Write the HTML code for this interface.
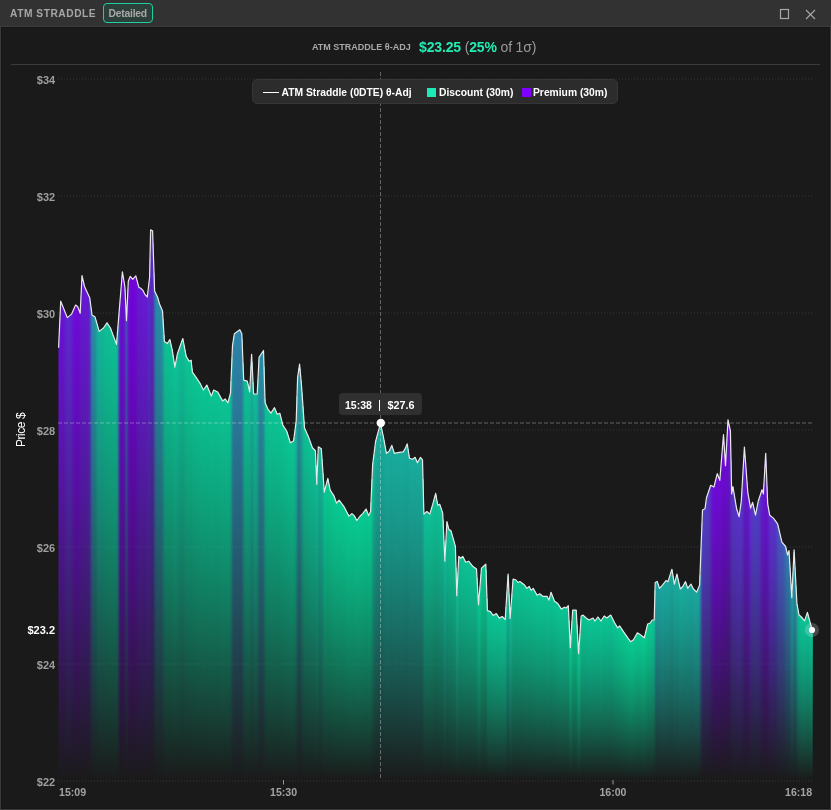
<!DOCTYPE html>
<html><head><meta charset="utf-8"><style>
*{margin:0;padding:0;box-sizing:border-box}
html,body{width:831px;height:810px;overflow:hidden;background:#3c3c3c;font-family:"Liberation Sans",sans-serif}
svg{position:absolute;left:0;top:0}
body{will-change:transform}
</style></head><body>
<div style="position:absolute;left:0;top:0;width:831px;height:26px;background:#323232"></div>
<div style="position:absolute;left:10.00px;top:8.67px;font-size:10.2px;line-height:10.2px;font-weight:bold;color:#a6a6a6;white-space:nowrap;letter-spacing:0.55px">ATM STRADDLE</div>
<div style="position:absolute;left:103px;top:3px;width:50px;height:20px;border:1.5px solid #1fcf9f;border-radius:4px;background:#2d3f3a"></div>
<div style="position:absolute;left:108.50px;top:8.58px;font-size:10.3px;line-height:10.3px;font-weight:bold;color:#a9a9a9;white-space:nowrap;letter-spacing:-0.2px">Detailed</div>
<svg width="831" height="27">
<rect x="780.5" y="9.5" width="8" height="9" fill="none" stroke="#a8a8a8" stroke-width="1.2"/>
<path d="M806,10 L815,19 M815,10 L806,19" stroke="#a8a8a8" stroke-width="1.1"/>
</svg>
<div style="position:absolute;left:1px;top:27px;width:829px;height:781.5px;background:#1a1a1a;box-shadow:inset 1px 1px 0 #151515, inset -1px -1px 0 #161616"></div>
<div style="position:absolute;left:11px;top:64px;width:809px;height:1px;background:#3b3b3b"></div>
<div style="position:absolute;left:312.00px;top:43.48px;font-size:9px;line-height:9px;font-weight:bold;color:#a8a8a8;white-space:nowrap;">ATM STRADDLE &#952;-ADJ</div>
<div style="position:absolute;left:419.00px;top:39.55px;font-size:14px;line-height:14px;color:#22ebb4;white-space:nowrap;letter-spacing:-0.15px"><b>$23.25</b> <span style="color:#9a9a9a">(</span><b>25%</b><span style="color:#9a9a9a"> of 1&#963;)</span></div>
<svg width="831" height="810">
<line x1="58" y1="79.0" x2="812" y2="79.0" stroke="#363636" stroke-width="1" stroke-dasharray="1,2"/><line x1="58" y1="196.0" x2="812" y2="196.0" stroke="#363636" stroke-width="1" stroke-dasharray="1,2"/><line x1="58" y1="313.0" x2="812" y2="313.0" stroke="#363636" stroke-width="1" stroke-dasharray="1,2"/><line x1="58" y1="430.0" x2="812" y2="430.0" stroke="#363636" stroke-width="1" stroke-dasharray="1,2"/><line x1="58" y1="547.0" x2="812" y2="547.0" stroke="#363636" stroke-width="1" stroke-dasharray="1,2"/><line x1="58" y1="664.0" x2="812" y2="664.0" stroke="#363636" stroke-width="1" stroke-dasharray="1,2"/><line x1="58" y1="781.0" x2="812" y2="781.0" stroke="#363636" stroke-width="1" stroke-dasharray="1,2"/>
<defs><linearGradient id="g0" x1="0" y1="0" x2="0" y2="1"><stop offset="0.00" stop-color="#06dc9e" stop-opacity="1.000"/><stop offset="1.00" stop-color="#06dc9e" stop-opacity="0.000"/></linearGradient><linearGradient id="g1" x1="0" y1="0" x2="0" y2="1"><stop offset="0.00" stop-color="#07d99f" stop-opacity="1.000"/><stop offset="1.00" stop-color="#07d99f" stop-opacity="0.000"/></linearGradient><linearGradient id="g2" x1="0" y1="0" x2="0" y2="1"><stop offset="0.00" stop-color="#09d6a0" stop-opacity="1.000"/><stop offset="1.00" stop-color="#09d6a0" stop-opacity="0.000"/></linearGradient><linearGradient id="g3" x1="0" y1="0" x2="0" y2="1"><stop offset="0.00" stop-color="#0ad4a1" stop-opacity="1.000"/><stop offset="1.00" stop-color="#0ad4a1" stop-opacity="0.000"/></linearGradient><linearGradient id="g4" x1="0" y1="0" x2="0" y2="1"><stop offset="0.00" stop-color="#0cd1a2" stop-opacity="1.000"/><stop offset="1.00" stop-color="#0cd1a2" stop-opacity="0.000"/></linearGradient><linearGradient id="g5" x1="0" y1="0" x2="0" y2="1"><stop offset="0.00" stop-color="#0dcea3" stop-opacity="1.000"/><stop offset="1.00" stop-color="#0dcea3" stop-opacity="0.000"/></linearGradient><linearGradient id="g6" x1="0" y1="0" x2="0" y2="1"><stop offset="0.00" stop-color="#0ecba4" stop-opacity="1.000"/><stop offset="1.00" stop-color="#0ecba4" stop-opacity="0.000"/></linearGradient><linearGradient id="g7" x1="0" y1="0" x2="0" y2="1"><stop offset="0.00" stop-color="#10c8a5" stop-opacity="1.000"/><stop offset="1.00" stop-color="#10c8a5" stop-opacity="0.000"/></linearGradient><linearGradient id="g8" x1="0" y1="0" x2="0" y2="1"><stop offset="0.00" stop-color="#11c6a6" stop-opacity="1.000"/><stop offset="1.00" stop-color="#11c6a6" stop-opacity="0.000"/></linearGradient><linearGradient id="g9" x1="0" y1="0" x2="0" y2="1"><stop offset="0.00" stop-color="#13c3a7" stop-opacity="1.000"/><stop offset="1.00" stop-color="#13c3a7" stop-opacity="0.000"/></linearGradient><linearGradient id="g10" x1="0" y1="0" x2="0" y2="1"><stop offset="0.00" stop-color="#14c0a8" stop-opacity="1.000"/><stop offset="1.00" stop-color="#14c0a8" stop-opacity="0.000"/></linearGradient><linearGradient id="g11" x1="0" y1="0" x2="0" y2="1"><stop offset="0.00" stop-color="#17bbaa" stop-opacity="1.000"/><stop offset="1.00" stop-color="#17bbaa" stop-opacity="0.000"/></linearGradient><linearGradient id="g12" x1="0" y1="0" x2="0" y2="1"><stop offset="0.00" stop-color="#19b6ab" stop-opacity="1.000"/><stop offset="1.00" stop-color="#19b6ab" stop-opacity="0.000"/></linearGradient><linearGradient id="g13" x1="0" y1="0" x2="0" y2="1"><stop offset="0.00" stop-color="#1cb1ad" stop-opacity="1.000"/><stop offset="1.00" stop-color="#1cb1ad" stop-opacity="0.000"/></linearGradient><linearGradient id="g14" x1="0" y1="0" x2="0" y2="1"><stop offset="0.00" stop-color="#1eacae" stop-opacity="1.000"/><stop offset="1.00" stop-color="#1eacae" stop-opacity="0.000"/></linearGradient><linearGradient id="g15" x1="0" y1="0" x2="0" y2="1"><stop offset="0.00" stop-color="#21a7b0" stop-opacity="1.000"/><stop offset="1.00" stop-color="#21a7b0" stop-opacity="0.000"/></linearGradient><linearGradient id="g16" x1="0" y1="0" x2="0" y2="1"><stop offset="0.00" stop-color="#24a2b2" stop-opacity="1.000"/><stop offset="1.00" stop-color="#24a2b2" stop-opacity="0.000"/></linearGradient><linearGradient id="g17" x1="0" y1="0" x2="0" y2="1"><stop offset="0.00" stop-color="#269db3" stop-opacity="1.000"/><stop offset="1.00" stop-color="#269db3" stop-opacity="0.000"/></linearGradient><linearGradient id="g18" x1="0" y1="0" x2="0" y2="1"><stop offset="0.00" stop-color="#2998b5" stop-opacity="1.000"/><stop offset="1.00" stop-color="#2998b5" stop-opacity="0.000"/></linearGradient><linearGradient id="g19" x1="0" y1="0" x2="0" y2="1"><stop offset="0.00" stop-color="#2b93b6" stop-opacity="1.000"/><stop offset="1.00" stop-color="#2b93b6" stop-opacity="0.000"/></linearGradient><linearGradient id="g20" x1="0" y1="0" x2="0" y2="1"><stop offset="0.00" stop-color="#2e8eb8" stop-opacity="1.000"/><stop offset="1.00" stop-color="#2e8eb8" stop-opacity="0.000"/></linearGradient><linearGradient id="g21" x1="0" y1="0" x2="0" y2="1"><stop offset="0.00" stop-color="#3384bc" stop-opacity="1.000"/><stop offset="1.00" stop-color="#3384bc" stop-opacity="0.000"/></linearGradient><linearGradient id="g22" x1="0" y1="0" x2="0" y2="1"><stop offset="0.00" stop-color="#397ac0" stop-opacity="1.000"/><stop offset="1.00" stop-color="#397ac0" stop-opacity="0.000"/></linearGradient><linearGradient id="g23" x1="0" y1="0" x2="0" y2="1"><stop offset="0.00" stop-color="#3e70c4" stop-opacity="1.000"/><stop offset="1.00" stop-color="#3e70c4" stop-opacity="0.000"/></linearGradient><linearGradient id="g24" x1="0" y1="0" x2="0" y2="1"><stop offset="0.00" stop-color="#4466c8" stop-opacity="1.000"/><stop offset="1.00" stop-color="#4466c8" stop-opacity="0.000"/></linearGradient><linearGradient id="g25" x1="0" y1="0" x2="0" y2="1"><stop offset="0.00" stop-color="#495ccc" stop-opacity="1.000"/><stop offset="1.00" stop-color="#495ccc" stop-opacity="0.000"/></linearGradient><linearGradient id="g26" x1="0" y1="0" x2="0" y2="1"><stop offset="0.00" stop-color="#4e52d0" stop-opacity="1.000"/><stop offset="1.00" stop-color="#4e52d0" stop-opacity="0.000"/></linearGradient><linearGradient id="g27" x1="0" y1="0" x2="0" y2="1"><stop offset="0.00" stop-color="#5448d4" stop-opacity="1.000"/><stop offset="1.00" stop-color="#5448d4" stop-opacity="0.000"/></linearGradient><linearGradient id="g28" x1="0" y1="0" x2="0" y2="1"><stop offset="0.00" stop-color="#593ed8" stop-opacity="1.000"/><stop offset="1.00" stop-color="#593ed8" stop-opacity="0.000"/></linearGradient><linearGradient id="g29" x1="0" y1="0" x2="0" y2="1"><stop offset="0.00" stop-color="#5f34dc" stop-opacity="1.000"/><stop offset="1.00" stop-color="#5f34dc" stop-opacity="0.000"/></linearGradient><linearGradient id="g30" x1="0" y1="0" x2="0" y2="1"><stop offset="0.00" stop-color="#642ae0" stop-opacity="1.000"/><stop offset="1.00" stop-color="#642ae0" stop-opacity="0.000"/></linearGradient><linearGradient id="g31" x1="0" y1="0" x2="0" y2="1"><stop offset="0.00" stop-color="#6626e1" stop-opacity="1.000"/><stop offset="1.00" stop-color="#6626e1" stop-opacity="0.000"/></linearGradient><linearGradient id="g32" x1="0" y1="0" x2="0" y2="1"><stop offset="0.00" stop-color="#6922e3" stop-opacity="1.000"/><stop offset="1.00" stop-color="#6922e3" stop-opacity="0.000"/></linearGradient><linearGradient id="g33" x1="0" y1="0" x2="0" y2="1"><stop offset="0.00" stop-color="#6b1de4" stop-opacity="1.000"/><stop offset="1.00" stop-color="#6b1de4" stop-opacity="0.000"/></linearGradient><linearGradient id="g34" x1="0" y1="0" x2="0" y2="1"><stop offset="0.00" stop-color="#6e19e6" stop-opacity="1.000"/><stop offset="1.00" stop-color="#6e19e6" stop-opacity="0.000"/></linearGradient><linearGradient id="g35" x1="0" y1="0" x2="0" y2="1"><stop offset="0.00" stop-color="#7015e7" stop-opacity="1.000"/><stop offset="1.00" stop-color="#7015e7" stop-opacity="0.000"/></linearGradient><linearGradient id="g36" x1="0" y1="0" x2="0" y2="1"><stop offset="0.00" stop-color="#7211e8" stop-opacity="1.000"/><stop offset="1.00" stop-color="#7211e8" stop-opacity="0.000"/></linearGradient><linearGradient id="g37" x1="0" y1="0" x2="0" y2="1"><stop offset="0.00" stop-color="#750dea" stop-opacity="1.000"/><stop offset="1.00" stop-color="#750dea" stop-opacity="0.000"/></linearGradient><linearGradient id="g38" x1="0" y1="0" x2="0" y2="1"><stop offset="0.00" stop-color="#7708eb" stop-opacity="1.000"/><stop offset="1.00" stop-color="#7708eb" stop-opacity="0.000"/></linearGradient><linearGradient id="g39" x1="0" y1="0" x2="0" y2="1"><stop offset="0.00" stop-color="#7a04ed" stop-opacity="1.000"/><stop offset="1.00" stop-color="#7a04ed" stop-opacity="0.000"/></linearGradient><linearGradient id="g40" x1="0" y1="0" x2="0" y2="1"><stop offset="0.00" stop-color="#7c00ee" stop-opacity="1.000"/><stop offset="1.00" stop-color="#7c00ee" stop-opacity="0.000"/></linearGradient></defs><rect x="58.5" y="338.9" width="1.3" height="441.1" fill="url(#g36)"/><rect x="59.5" y="316.7" width="1.3" height="463.3" fill="url(#g36)"/><rect x="60.5" y="301.9" width="1.3" height="478.1" fill="url(#g36)"/><rect x="61.5" y="304.4" width="1.3" height="475.6" fill="url(#g36)"/><rect x="62.5" y="306.9" width="1.3" height="473.1" fill="url(#g36)"/><rect x="63.5" y="309.4" width="1.3" height="470.6" fill="url(#g35)"/><rect x="64.5" y="311.9" width="1.3" height="468.1" fill="url(#g34)"/><rect x="65.5" y="314.4" width="1.3" height="465.6" fill="url(#g32)"/><rect x="66.5" y="316.9" width="1.3" height="463.1" fill="url(#g31)"/><rect x="67.5" y="317.0" width="1.3" height="463.0" fill="url(#g30)"/><rect x="68.5" y="316.2" width="1.3" height="463.8" fill="url(#g30)"/><rect x="69.5" y="315.4" width="1.3" height="464.6" fill="url(#g30)"/><rect x="70.5" y="314.6" width="1.3" height="465.4" fill="url(#g31)"/><rect x="71.5" y="313.2" width="1.3" height="466.8" fill="url(#g33)"/><rect x="72.5" y="310.9" width="1.3" height="469.1" fill="url(#g35)"/><rect x="73.5" y="308.7" width="1.3" height="471.3" fill="url(#g37)"/><rect x="74.5" y="306.4" width="1.3" height="473.6" fill="url(#g38)"/><rect x="75.5" y="305.4" width="1.3" height="474.6" fill="url(#g38)"/><rect x="76.5" y="306.0" width="1.3" height="474.0" fill="url(#g38)"/><rect x="77.5" y="307.5" width="1.3" height="472.5" fill="url(#g38)"/><rect x="78.5" y="310.1" width="1.3" height="469.9" fill="url(#g38)"/><rect x="79.5" y="312.8" width="1.3" height="467.2" fill="url(#g37)"/><rect x="80.5" y="296.5" width="1.3" height="483.5" fill="url(#g35)"/><rect x="81.5" y="275.6" width="1.3" height="504.4" fill="url(#g34)"/><rect x="82.5" y="280.0" width="1.3" height="500.0" fill="url(#g34)"/><rect x="83.5" y="284.3" width="1.3" height="495.7" fill="url(#g34)"/><rect x="84.5" y="287.6" width="1.3" height="492.4" fill="url(#g34)"/><rect x="85.5" y="289.7" width="1.3" height="490.3" fill="url(#g34)"/><rect x="86.5" y="291.9" width="1.3" height="488.1" fill="url(#g34)"/><rect x="87.5" y="294.0" width="1.3" height="486.0" fill="url(#g34)"/><rect x="88.5" y="296.2" width="1.3" height="483.8" fill="url(#g32)"/><rect x="89.5" y="300.0" width="1.3" height="480.0" fill="url(#g28)"/><rect x="90.5" y="307.5" width="1.3" height="472.5" fill="url(#g24)"/><rect x="91.5" y="315.0" width="1.3" height="465.0" fill="url(#g20)"/><rect x="92.5" y="315.6" width="1.3" height="464.4" fill="url(#g18)"/><rect x="93.5" y="316.2" width="1.3" height="463.8" fill="url(#g18)"/><rect x="94.5" y="317.0" width="1.3" height="463.0" fill="url(#g17)"/><rect x="95.5" y="320.5" width="1.3" height="459.5" fill="url(#g15)"/><rect x="96.5" y="323.9" width="1.3" height="456.1" fill="url(#g11)"/><rect x="97.5" y="327.3" width="1.3" height="452.7" fill="url(#g9)"/><rect x="98.5" y="330.7" width="1.3" height="449.3" fill="url(#g8)"/><rect x="99.5" y="330.8" width="1.3" height="449.2" fill="url(#g8)"/><rect x="100.5" y="330.0" width="1.3" height="450.0" fill="url(#g8)"/><rect x="101.5" y="329.2" width="1.3" height="450.8" fill="url(#g8)"/><rect x="102.5" y="328.4" width="1.3" height="451.6" fill="url(#g8)"/><rect x="103.5" y="327.3" width="1.3" height="452.7" fill="url(#g7)"/><rect x="104.5" y="325.8" width="1.3" height="454.2" fill="url(#g5)"/><rect x="105.5" y="324.3" width="1.3" height="455.7" fill="url(#g4)"/><rect x="106.5" y="322.8" width="1.3" height="457.2" fill="url(#g4)"/><rect x="107.5" y="324.3" width="1.3" height="455.7" fill="url(#g4)"/><rect x="108.5" y="325.9" width="1.3" height="454.1" fill="url(#g4)"/><rect x="109.5" y="327.4" width="1.3" height="452.6" fill="url(#g4)"/><rect x="110.5" y="329.6" width="1.3" height="450.4" fill="url(#g4)"/><rect x="111.5" y="332.3" width="1.3" height="447.7" fill="url(#g4)"/><rect x="112.5" y="335.0" width="1.3" height="445.0" fill="url(#g4)"/><rect x="113.5" y="337.7" width="1.3" height="442.3" fill="url(#g4)"/><rect x="114.5" y="340.4" width="1.3" height="439.6" fill="url(#g4)"/><rect x="115.5" y="343.1" width="1.3" height="436.9" fill="url(#g5)"/><rect x="116.5" y="338.2" width="1.3" height="441.8" fill="url(#g8)"/><rect x="117.5" y="325.9" width="1.3" height="454.1" fill="url(#g16)"/><rect x="118.5" y="313.6" width="1.3" height="466.4" fill="url(#g26)"/><rect x="119.5" y="301.3" width="1.3" height="478.7" fill="url(#g34)"/><rect x="120.5" y="289.0" width="1.3" height="491.0" fill="url(#g37)"/><rect x="121.5" y="276.7" width="1.3" height="503.3" fill="url(#g38)"/><rect x="122.5" y="275.4" width="1.3" height="504.6" fill="url(#g37)"/><rect x="123.5" y="281.5" width="1.3" height="498.5" fill="url(#g35)"/><rect x="124.5" y="289.1" width="1.3" height="490.9" fill="url(#g31)"/><rect x="125.5" y="310.2" width="1.3" height="469.8" fill="url(#g26)"/><rect x="126.5" y="309.7" width="1.3" height="470.3" fill="url(#g27)"/><rect x="127.5" y="287.8" width="1.3" height="492.2" fill="url(#g32)"/><rect x="128.5" y="279.5" width="1.3" height="500.5" fill="url(#g37)"/><rect x="129.5" y="277.0" width="1.3" height="503.0" fill="url(#g39)"/><rect x="130.5" y="277.1" width="1.3" height="502.9" fill="url(#g40)"/><rect x="131.5" y="278.3" width="1.3" height="501.7" fill="url(#g40)"/><rect x="132.5" y="279.1" width="1.3" height="500.9" fill="url(#g40)"/><rect x="133.5" y="277.9" width="1.3" height="502.1" fill="url(#g40)"/><rect x="134.5" y="276.8" width="1.3" height="503.2" fill="url(#g39)"/><rect x="135.5" y="276.7" width="1.3" height="503.3" fill="url(#g38)"/><rect x="136.5" y="280.4" width="1.3" height="499.6" fill="url(#g36)"/><rect x="137.5" y="284.2" width="1.3" height="495.8" fill="url(#g35)"/><rect x="138.5" y="287.3" width="1.3" height="492.7" fill="url(#g34)"/><rect x="139.5" y="287.8" width="1.3" height="492.2" fill="url(#g34)"/><rect x="140.5" y="288.5" width="1.3" height="491.5" fill="url(#g34)"/><rect x="141.5" y="289.4" width="1.3" height="490.6" fill="url(#g34)"/><rect x="142.5" y="290.7" width="1.3" height="489.3" fill="url(#g34)"/><rect x="143.5" y="292.7" width="1.3" height="487.3" fill="url(#g34)"/><rect x="144.5" y="294.4" width="1.3" height="485.6" fill="url(#g34)"/><rect x="145.5" y="295.6" width="1.3" height="484.4" fill="url(#g34)"/><rect x="146.5" y="296.7" width="1.3" height="483.3" fill="url(#g33)"/><rect x="147.5" y="291.0" width="1.3" height="489.0" fill="url(#g31)"/><rect x="148.5" y="282.4" width="1.3" height="497.6" fill="url(#g30)"/><rect x="149.5" y="258.3" width="1.3" height="521.7" fill="url(#g30)"/><rect x="150.5" y="230.1" width="1.3" height="549.9" fill="url(#g30)"/><rect x="151.5" y="230.6" width="1.3" height="549.4" fill="url(#g30)"/><rect x="152.5" y="242.9" width="1.3" height="537.1" fill="url(#g29)"/><rect x="153.5" y="273.0" width="1.3" height="507.0" fill="url(#g26)"/><rect x="154.5" y="291.9" width="1.3" height="488.1" fill="url(#g22)"/><rect x="155.5" y="293.9" width="1.3" height="486.1" fill="url(#g19)"/><rect x="156.5" y="296.0" width="1.3" height="484.0" fill="url(#g18)"/><rect x="157.5" y="298.8" width="1.3" height="481.2" fill="url(#g18)"/><rect x="158.5" y="302.2" width="1.3" height="477.8" fill="url(#g18)"/><rect x="159.5" y="305.1" width="1.3" height="474.9" fill="url(#g18)"/><rect x="160.5" y="307.4" width="1.3" height="472.6" fill="url(#g18)"/><rect x="161.5" y="309.8" width="1.3" height="470.2" fill="url(#g16)"/><rect x="162.5" y="319.0" width="1.3" height="461.0" fill="url(#g13)"/><rect x="163.5" y="335.1" width="1.3" height="444.9" fill="url(#g8)"/><rect x="164.5" y="341.9" width="1.3" height="438.1" fill="url(#g5)"/><rect x="165.5" y="342.6" width="1.3" height="437.4" fill="url(#g4)"/><rect x="166.5" y="343.2" width="1.3" height="436.8" fill="url(#g3)"/><rect x="167.5" y="342.5" width="1.3" height="437.5" fill="url(#g3)"/><rect x="168.5" y="340.8" width="1.3" height="439.2" fill="url(#g3)"/><rect x="169.5" y="340.4" width="1.3" height="439.6" fill="url(#g3)"/><rect x="170.5" y="344.7" width="1.3" height="435.3" fill="url(#g3)"/><rect x="171.5" y="349.1" width="1.3" height="430.9" fill="url(#g3)"/><rect x="172.5" y="354.9" width="1.3" height="425.1" fill="url(#g3)"/><rect x="173.5" y="361.4" width="1.3" height="418.6" fill="url(#g3)"/><rect x="174.5" y="366.7" width="1.3" height="413.3" fill="url(#g3)"/><rect x="175.5" y="361.3" width="1.3" height="418.7" fill="url(#g3)"/><rect x="176.5" y="355.9" width="1.3" height="424.1" fill="url(#g3)"/><rect x="177.5" y="352.3" width="1.3" height="427.7" fill="url(#g4)"/><rect x="178.5" y="349.4" width="1.3" height="430.6" fill="url(#g4)"/><rect x="179.5" y="346.5" width="1.3" height="433.5" fill="url(#g5)"/><rect x="180.5" y="343.7" width="1.3" height="436.3" fill="url(#g6)"/><rect x="181.5" y="340.8" width="1.3" height="439.2" fill="url(#g6)"/><rect x="182.5" y="339.5" width="1.3" height="440.5" fill="url(#g5)"/><rect x="183.5" y="344.8" width="1.3" height="435.2" fill="url(#g4)"/><rect x="184.5" y="350.0" width="1.3" height="430.0" fill="url(#g3)"/><rect x="185.5" y="355.3" width="1.3" height="424.7" fill="url(#g2)"/><rect x="186.5" y="357.7" width="1.3" height="422.3" fill="url(#g2)"/><rect x="187.5" y="359.3" width="1.3" height="420.7" fill="url(#g2)"/><rect x="188.5" y="361.0" width="1.3" height="419.0" fill="url(#g2)"/><rect x="189.5" y="360.8" width="1.3" height="419.2" fill="url(#g2)"/><rect x="190.5" y="360.2" width="1.3" height="419.8" fill="url(#g2)"/><rect x="191.5" y="368.5" width="1.3" height="411.5" fill="url(#g2)"/><rect x="192.5" y="373.1" width="1.3" height="406.9" fill="url(#g2)"/><rect x="193.5" y="374.5" width="1.3" height="405.5" fill="url(#g2)"/><rect x="194.5" y="375.9" width="1.3" height="404.1" fill="url(#g2)"/><rect x="195.5" y="377.3" width="1.3" height="402.7" fill="url(#g2)"/><rect x="196.5" y="378.8" width="1.3" height="401.2" fill="url(#g2)"/><rect x="197.5" y="380.3" width="1.3" height="399.7" fill="url(#g2)"/><rect x="198.5" y="381.8" width="1.3" height="398.2" fill="url(#g2)"/><rect x="199.5" y="383.3" width="1.3" height="396.7" fill="url(#g2)"/><rect x="200.5" y="385.3" width="1.3" height="394.7" fill="url(#g2)"/><rect x="201.5" y="387.2" width="1.3" height="392.8" fill="url(#g2)"/><rect x="202.5" y="389.2" width="1.3" height="390.8" fill="url(#g2)"/><rect x="203.5" y="389.1" width="1.3" height="390.9" fill="url(#g2)"/><rect x="204.5" y="387.7" width="1.3" height="392.3" fill="url(#g2)"/><rect x="205.5" y="386.3" width="1.3" height="393.7" fill="url(#g2)"/><rect x="206.5" y="385.6" width="1.3" height="394.4" fill="url(#g2)"/><rect x="207.5" y="388.0" width="1.3" height="392.0" fill="url(#g2)"/><rect x="208.5" y="390.4" width="1.3" height="389.6" fill="url(#g2)"/><rect x="209.5" y="392.8" width="1.3" height="387.2" fill="url(#g2)"/><rect x="210.5" y="395.2" width="1.3" height="384.8" fill="url(#g2)"/><rect x="211.5" y="394.2" width="1.3" height="385.8" fill="url(#g2)"/><rect x="212.5" y="391.7" width="1.3" height="388.3" fill="url(#g2)"/><rect x="213.5" y="390.1" width="1.3" height="389.9" fill="url(#g2)"/><rect x="214.5" y="390.6" width="1.3" height="389.4" fill="url(#g2)"/><rect x="215.5" y="391.1" width="1.3" height="388.9" fill="url(#g2)"/><rect x="216.5" y="391.6" width="1.3" height="388.4" fill="url(#g2)"/><rect x="217.5" y="392.5" width="1.3" height="387.5" fill="url(#g2)"/><rect x="218.5" y="394.4" width="1.3" height="385.6" fill="url(#g2)"/><rect x="219.5" y="396.2" width="1.3" height="383.8" fill="url(#g2)"/><rect x="220.5" y="398.0" width="1.3" height="382.0" fill="url(#g2)"/><rect x="221.5" y="399.8" width="1.3" height="380.2" fill="url(#g2)"/><rect x="222.5" y="400.6" width="1.3" height="379.4" fill="url(#g2)"/><rect x="223.5" y="399.8" width="1.3" height="380.2" fill="url(#g2)"/><rect x="224.5" y="399.1" width="1.3" height="380.9" fill="url(#g2)"/><rect x="225.5" y="400.1" width="1.3" height="379.9" fill="url(#g2)"/><rect x="226.5" y="401.5" width="1.3" height="378.5" fill="url(#g2)"/><rect x="227.5" y="402.4" width="1.3" height="377.6" fill="url(#g2)"/><rect x="228.5" y="398.7" width="1.3" height="381.3" fill="url(#g2)"/><rect x="229.5" y="394.9" width="1.3" height="385.1" fill="url(#g4)"/><rect x="230.5" y="381.1" width="1.3" height="398.9" fill="url(#g8)"/><rect x="231.5" y="357.5" width="1.3" height="422.5" fill="url(#g14)"/><rect x="232.5" y="342.5" width="1.3" height="437.5" fill="url(#g18)"/><rect x="233.5" y="336.2" width="1.3" height="443.8" fill="url(#g20)"/><rect x="234.5" y="333.3" width="1.3" height="446.7" fill="url(#g20)"/><rect x="235.5" y="332.5" width="1.3" height="447.5" fill="url(#g20)"/><rect x="236.5" y="331.8" width="1.3" height="448.2" fill="url(#g20)"/><rect x="237.5" y="331.1" width="1.3" height="448.9" fill="url(#g20)"/><rect x="238.5" y="330.4" width="1.3" height="449.6" fill="url(#g20)"/><rect x="239.5" y="330.2" width="1.3" height="449.8" fill="url(#g20)"/><rect x="240.5" y="332.1" width="1.3" height="447.9" fill="url(#g20)"/><rect x="241.5" y="338.6" width="1.3" height="441.4" fill="url(#g18)"/><rect x="242.5" y="363.0" width="1.3" height="417.0" fill="url(#g14)"/><rect x="243.5" y="380.2" width="1.3" height="399.8" fill="url(#g10)"/><rect x="244.5" y="380.5" width="1.3" height="399.5" fill="url(#g6)"/><rect x="245.5" y="380.7" width="1.3" height="399.3" fill="url(#g4)"/><rect x="246.5" y="381.0" width="1.3" height="399.0" fill="url(#g4)"/><rect x="247.5" y="384.3" width="1.3" height="395.7" fill="url(#g4)"/><rect x="248.5" y="388.8" width="1.3" height="391.2" fill="url(#g5)"/><rect x="249.5" y="386.1" width="1.3" height="393.9" fill="url(#g7)"/><rect x="250.5" y="366.3" width="1.3" height="413.7" fill="url(#g9)"/><rect x="251.5" y="362.3" width="1.3" height="417.7" fill="url(#g10)"/><rect x="252.5" y="382.1" width="1.3" height="397.9" fill="url(#g9)"/><rect x="253.5" y="394.0" width="1.3" height="386.0" fill="url(#g7)"/><rect x="254.5" y="394.0" width="1.3" height="386.0" fill="url(#g5)"/><rect x="255.5" y="394.0" width="1.3" height="386.0" fill="url(#g6)"/><rect x="256.5" y="394.0" width="1.3" height="386.0" fill="url(#g9)"/><rect x="257.5" y="378.6" width="1.3" height="401.4" fill="url(#g13)"/><rect x="258.5" y="359.3" width="1.3" height="420.7" fill="url(#g16)"/><rect x="259.5" y="356.0" width="1.3" height="424.0" fill="url(#g18)"/><rect x="260.5" y="354.4" width="1.3" height="425.6" fill="url(#g18)"/><rect x="261.5" y="352.9" width="1.3" height="427.1" fill="url(#g18)"/><rect x="262.5" y="351.3" width="1.3" height="428.7" fill="url(#g16)"/><rect x="263.5" y="366.8" width="1.3" height="413.2" fill="url(#g12)"/><rect x="264.5" y="399.5" width="1.3" height="380.5" fill="url(#g8)"/><rect x="265.5" y="404.8" width="1.3" height="375.2" fill="url(#g4)"/><rect x="266.5" y="407.1" width="1.3" height="372.9" fill="url(#g2)"/><rect x="267.5" y="409.3" width="1.3" height="370.7" fill="url(#g2)"/><rect x="268.5" y="410.6" width="1.3" height="369.4" fill="url(#g2)"/><rect x="269.5" y="412.0" width="1.3" height="368.0" fill="url(#g2)"/><rect x="270.5" y="413.0" width="1.3" height="367.0" fill="url(#g2)"/><rect x="271.5" y="411.5" width="1.3" height="368.5" fill="url(#g2)"/><rect x="272.5" y="410.0" width="1.3" height="370.0" fill="url(#g2)"/><rect x="273.5" y="408.5" width="1.3" height="371.5" fill="url(#g2)"/><rect x="274.5" y="408.9" width="1.3" height="371.1" fill="url(#g2)"/><rect x="275.5" y="411.3" width="1.3" height="368.7" fill="url(#g2)"/><rect x="276.5" y="413.7" width="1.3" height="366.3" fill="url(#g2)"/><rect x="277.5" y="413.9" width="1.3" height="366.1" fill="url(#g2)"/><rect x="278.5" y="413.5" width="1.3" height="366.5" fill="url(#g2)"/><rect x="279.5" y="414.0" width="1.3" height="366.0" fill="url(#g2)"/><rect x="280.5" y="418.0" width="1.3" height="362.0" fill="url(#g2)"/><rect x="281.5" y="421.9" width="1.3" height="358.1" fill="url(#g2)"/><rect x="282.5" y="425.4" width="1.3" height="354.6" fill="url(#g2)"/><rect x="283.5" y="426.9" width="1.3" height="353.1" fill="url(#g2)"/><rect x="284.5" y="428.4" width="1.3" height="351.6" fill="url(#g2)"/><rect x="285.5" y="429.9" width="1.3" height="350.1" fill="url(#g2)"/><rect x="286.5" y="432.0" width="1.3" height="348.0" fill="url(#g2)"/><rect x="287.5" y="435.3" width="1.3" height="344.7" fill="url(#g2)"/><rect x="288.5" y="438.5" width="1.3" height="341.5" fill="url(#g2)"/><rect x="289.5" y="441.8" width="1.3" height="338.2" fill="url(#g2)"/><rect x="290.5" y="442.4" width="1.3" height="337.6" fill="url(#g2)"/><rect x="291.5" y="441.8" width="1.3" height="338.2" fill="url(#g2)"/><rect x="292.5" y="441.2" width="1.3" height="338.8" fill="url(#g2)"/><rect x="293.5" y="437.9" width="1.3" height="342.1" fill="url(#g2)"/><rect x="294.5" y="430.2" width="1.3" height="349.8" fill="url(#g4)"/><rect x="295.5" y="422.6" width="1.3" height="357.4" fill="url(#g8)"/><rect x="296.5" y="396.3" width="1.3" height="383.7" fill="url(#g12)"/><rect x="297.5" y="375.0" width="1.3" height="405.0" fill="url(#g16)"/><rect x="298.5" y="368.3" width="1.3" height="411.7" fill="url(#g17)"/><rect x="299.5" y="368.7" width="1.3" height="411.3" fill="url(#g16)"/><rect x="300.5" y="380.0" width="1.3" height="400.0" fill="url(#g13)"/><rect x="301.5" y="392.7" width="1.3" height="387.3" fill="url(#g9)"/><rect x="302.5" y="406.8" width="1.3" height="373.2" fill="url(#g6)"/><rect x="303.5" y="420.9" width="1.3" height="359.1" fill="url(#g4)"/><rect x="304.5" y="429.1" width="1.3" height="350.9" fill="url(#g4)"/><rect x="305.5" y="431.3" width="1.3" height="348.7" fill="url(#g4)"/><rect x="306.5" y="433.6" width="1.3" height="346.4" fill="url(#g4)"/><rect x="307.5" y="435.8" width="1.3" height="344.2" fill="url(#g4)"/><rect x="308.5" y="438.3" width="1.3" height="341.7" fill="url(#g4)"/><rect x="309.5" y="441.1" width="1.3" height="338.9" fill="url(#g4)"/><rect x="310.5" y="443.9" width="1.3" height="336.1" fill="url(#g4)"/><rect x="311.5" y="446.7" width="1.3" height="333.3" fill="url(#g4)"/><rect x="312.5" y="448.4" width="1.3" height="331.6" fill="url(#g4)"/><rect x="313.5" y="449.3" width="1.3" height="330.7" fill="url(#g4)"/><rect x="314.5" y="450.3" width="1.3" height="329.7" fill="url(#g4)"/><rect x="315.5" y="465.1" width="1.3" height="314.9" fill="url(#g4)"/><rect x="316.5" y="479.3" width="1.3" height="300.7" fill="url(#g5)"/><rect x="317.5" y="454.3" width="1.3" height="325.7" fill="url(#g7)"/><rect x="318.5" y="447.3" width="1.3" height="332.7" fill="url(#g8)"/><rect x="319.5" y="447.9" width="1.3" height="332.1" fill="url(#g8)"/><rect x="320.5" y="448.6" width="1.3" height="331.4" fill="url(#g8)"/><rect x="321.5" y="458.9" width="1.3" height="321.1" fill="url(#g7)"/><rect x="322.5" y="473.4" width="1.3" height="306.6" fill="url(#g5)"/><rect x="323.5" y="487.9" width="1.3" height="292.1" fill="url(#g3)"/><rect x="324.5" y="489.4" width="1.3" height="290.6" fill="url(#g1)"/><rect x="325.5" y="485.5" width="1.3" height="294.5" fill="url(#g0)"/><rect x="326.5" y="481.6" width="1.3" height="298.4" fill="url(#g0)"/><rect x="327.5" y="479.4" width="1.3" height="300.6" fill="url(#g0)"/><rect x="328.5" y="484.3" width="1.3" height="295.7" fill="url(#g0)"/><rect x="329.5" y="489.2" width="1.3" height="290.8" fill="url(#g0)"/><rect x="330.5" y="491.4" width="1.3" height="288.6" fill="url(#g0)"/><rect x="331.5" y="493.0" width="1.3" height="287.0" fill="url(#g0)"/><rect x="332.5" y="494.5" width="1.3" height="285.5" fill="url(#g0)"/><rect x="333.5" y="496.0" width="1.3" height="284.0" fill="url(#g0)"/><rect x="334.5" y="498.8" width="1.3" height="281.2" fill="url(#g0)"/><rect x="335.5" y="501.7" width="1.3" height="278.3" fill="url(#g0)"/><rect x="336.5" y="502.5" width="1.3" height="277.5" fill="url(#g0)"/><rect x="337.5" y="501.4" width="1.3" height="278.6" fill="url(#g0)"/><rect x="338.5" y="500.2" width="1.3" height="279.8" fill="url(#g0)"/><rect x="339.5" y="501.3" width="1.3" height="278.7" fill="url(#g0)"/><rect x="340.5" y="502.7" width="1.3" height="277.3" fill="url(#g0)"/><rect x="341.5" y="504.0" width="1.3" height="276.0" fill="url(#g0)"/><rect x="342.5" y="505.4" width="1.3" height="274.6" fill="url(#g0)"/><rect x="343.5" y="506.7" width="1.3" height="273.3" fill="url(#g0)"/><rect x="344.5" y="508.6" width="1.3" height="271.4" fill="url(#g0)"/><rect x="345.5" y="510.5" width="1.3" height="269.5" fill="url(#g0)"/><rect x="346.5" y="512.5" width="1.3" height="267.5" fill="url(#g0)"/><rect x="347.5" y="514.4" width="1.3" height="265.6" fill="url(#g0)"/><rect x="348.5" y="516.0" width="1.3" height="264.0" fill="url(#g0)"/><rect x="349.5" y="515.2" width="1.3" height="264.8" fill="url(#g0)"/><rect x="350.5" y="514.4" width="1.3" height="265.6" fill="url(#g0)"/><rect x="351.5" y="513.7" width="1.3" height="266.3" fill="url(#g0)"/><rect x="352.5" y="514.6" width="1.3" height="265.4" fill="url(#g0)"/><rect x="353.5" y="515.4" width="1.3" height="264.6" fill="url(#g0)"/><rect x="354.5" y="517.1" width="1.3" height="262.9" fill="url(#g0)"/><rect x="355.5" y="519.0" width="1.3" height="261.0" fill="url(#g0)"/><rect x="356.5" y="520.2" width="1.3" height="259.8" fill="url(#g0)"/><rect x="357.5" y="518.9" width="1.3" height="261.1" fill="url(#g0)"/><rect x="358.5" y="517.6" width="1.3" height="262.4" fill="url(#g0)"/><rect x="359.5" y="516.3" width="1.3" height="263.7" fill="url(#g0)"/><rect x="360.5" y="515.3" width="1.3" height="264.7" fill="url(#g0)"/><rect x="361.5" y="514.3" width="1.3" height="265.7" fill="url(#g0)"/><rect x="362.5" y="513.2" width="1.3" height="266.8" fill="url(#g0)"/><rect x="363.5" y="511.8" width="1.3" height="268.2" fill="url(#g0)"/><rect x="364.5" y="510.5" width="1.3" height="269.5" fill="url(#g0)"/><rect x="365.5" y="509.1" width="1.3" height="270.9" fill="url(#g0)"/><rect x="366.5" y="511.4" width="1.3" height="268.6" fill="url(#g0)"/><rect x="367.5" y="514.0" width="1.3" height="266.0" fill="url(#g0)"/><rect x="368.5" y="514.8" width="1.3" height="265.2" fill="url(#g0)"/><rect x="369.5" y="512.8" width="1.3" height="267.2" fill="url(#g0)"/><rect x="370.5" y="502.3" width="1.3" height="277.7" fill="url(#g0)"/><rect x="371.5" y="479.1" width="1.3" height="300.9" fill="url(#g1)"/><rect x="372.5" y="462.0" width="1.3" height="318.0" fill="url(#g4)"/><rect x="373.5" y="454.1" width="1.3" height="325.9" fill="url(#g7)"/><rect x="374.5" y="446.2" width="1.3" height="333.8" fill="url(#g10)"/><rect x="375.5" y="440.0" width="1.3" height="340.0" fill="url(#g11)"/><rect x="376.5" y="436.3" width="1.3" height="343.7" fill="url(#g11)"/><rect x="377.5" y="432.6" width="1.3" height="347.4" fill="url(#g11)"/><rect x="378.5" y="428.9" width="1.3" height="351.1" fill="url(#g11)"/><rect x="379.5" y="425.2" width="1.3" height="354.8" fill="url(#g11)"/><rect x="380.5" y="425.7" width="1.3" height="354.3" fill="url(#g11)"/><rect x="381.5" y="430.4" width="1.3" height="349.6" fill="url(#g11)"/><rect x="382.5" y="435.1" width="1.3" height="344.9" fill="url(#g11)"/><rect x="383.5" y="440.2" width="1.3" height="339.8" fill="url(#g11)"/><rect x="384.5" y="445.7" width="1.3" height="334.3" fill="url(#g11)"/><rect x="385.5" y="451.1" width="1.3" height="328.9" fill="url(#g11)"/><rect x="386.5" y="452.9" width="1.3" height="327.1" fill="url(#g11)"/><rect x="387.5" y="452.1" width="1.3" height="327.9" fill="url(#g11)"/><rect x="388.5" y="451.4" width="1.3" height="328.6" fill="url(#g11)"/><rect x="389.5" y="449.3" width="1.3" height="330.7" fill="url(#g11)"/><rect x="390.5" y="447.1" width="1.3" height="332.9" fill="url(#g11)"/><rect x="391.5" y="446.0" width="1.3" height="334.0" fill="url(#g11)"/><rect x="392.5" y="449.2" width="1.3" height="330.8" fill="url(#g11)"/><rect x="393.5" y="452.4" width="1.3" height="327.6" fill="url(#g11)"/><rect x="394.5" y="453.2" width="1.3" height="326.8" fill="url(#g11)"/><rect x="395.5" y="453.0" width="1.3" height="327.0" fill="url(#g11)"/><rect x="396.5" y="452.8" width="1.3" height="327.2" fill="url(#g11)"/><rect x="397.5" y="452.6" width="1.3" height="327.4" fill="url(#g11)"/><rect x="398.5" y="452.4" width="1.3" height="327.6" fill="url(#g11)"/><rect x="399.5" y="452.2" width="1.3" height="327.8" fill="url(#g11)"/><rect x="400.5" y="452.1" width="1.3" height="327.9" fill="url(#g11)"/><rect x="401.5" y="452.0" width="1.3" height="328.0" fill="url(#g11)"/><rect x="402.5" y="451.8" width="1.3" height="328.2" fill="url(#g11)"/><rect x="403.5" y="450.6" width="1.3" height="329.4" fill="url(#g11)"/><rect x="404.5" y="448.9" width="1.3" height="331.1" fill="url(#g11)"/><rect x="405.5" y="446.6" width="1.3" height="333.4" fill="url(#g11)"/><rect x="406.5" y="444.4" width="1.3" height="335.6" fill="url(#g11)"/><rect x="407.5" y="448.9" width="1.3" height="331.1" fill="url(#g11)"/><rect x="408.5" y="455.2" width="1.3" height="324.8" fill="url(#g11)"/><rect x="409.5" y="458.5" width="1.3" height="321.5" fill="url(#g11)"/><rect x="410.5" y="458.8" width="1.3" height="321.2" fill="url(#g11)"/><rect x="411.5" y="459.1" width="1.3" height="320.9" fill="url(#g11)"/><rect x="412.5" y="459.1" width="1.3" height="320.9" fill="url(#g11)"/><rect x="413.5" y="458.2" width="1.3" height="321.8" fill="url(#g11)"/><rect x="414.5" y="457.4" width="1.3" height="322.6" fill="url(#g11)"/><rect x="415.5" y="459.5" width="1.3" height="320.5" fill="url(#g11)"/><rect x="416.5" y="461.8" width="1.3" height="318.2" fill="url(#g11)"/><rect x="417.5" y="461.8" width="1.3" height="318.2" fill="url(#g11)"/><rect x="418.5" y="460.0" width="1.3" height="320.0" fill="url(#g11)"/><rect x="419.5" y="458.3" width="1.3" height="321.7" fill="url(#g11)"/><rect x="420.5" y="458.0" width="1.3" height="322.0" fill="url(#g11)"/><rect x="421.5" y="459.2" width="1.3" height="320.8" fill="url(#g10)"/><rect x="422.5" y="479.2" width="1.3" height="300.8" fill="url(#g9)"/><rect x="423.5" y="514.0" width="1.3" height="266.0" fill="url(#g6)"/><rect x="424.5" y="513.1" width="1.3" height="266.9" fill="url(#g5)"/><rect x="425.5" y="512.3" width="1.3" height="267.7" fill="url(#g4)"/><rect x="426.5" y="511.6" width="1.3" height="268.4" fill="url(#g4)"/><rect x="427.5" y="512.5" width="1.3" height="267.5" fill="url(#g4)"/><rect x="428.5" y="513.4" width="1.3" height="266.6" fill="url(#g4)"/><rect x="429.5" y="513.4" width="1.3" height="266.6" fill="url(#g4)"/><rect x="430.5" y="510.1" width="1.3" height="269.9" fill="url(#g4)"/><rect x="431.5" y="506.8" width="1.3" height="273.2" fill="url(#g4)"/><rect x="432.5" y="503.4" width="1.3" height="276.6" fill="url(#g4)"/><rect x="433.5" y="499.7" width="1.3" height="280.3" fill="url(#g4)"/><rect x="434.5" y="495.9" width="1.3" height="284.1" fill="url(#g4)"/><rect x="435.5" y="495.1" width="1.3" height="284.9" fill="url(#g4)"/><rect x="436.5" y="501.0" width="1.3" height="279.0" fill="url(#g4)"/><rect x="437.5" y="505.0" width="1.3" height="275.0" fill="url(#g4)"/><rect x="438.5" y="504.5" width="1.3" height="275.5" fill="url(#g4)"/><rect x="439.5" y="505.1" width="1.3" height="274.9" fill="url(#g4)"/><rect x="440.5" y="508.1" width="1.3" height="271.9" fill="url(#g4)"/><rect x="441.5" y="511.0" width="1.3" height="269.0" fill="url(#g4)"/><rect x="442.5" y="519.7" width="1.3" height="260.3" fill="url(#g5)"/><rect x="443.5" y="541.5" width="1.3" height="238.5" fill="url(#g6)"/><rect x="444.5" y="559.2" width="1.3" height="220.8" fill="url(#g7)"/><rect x="445.5" y="539.5" width="1.3" height="240.5" fill="url(#g6)"/><rect x="446.5" y="522.1" width="1.3" height="257.9" fill="url(#g5)"/><rect x="447.5" y="526.0" width="1.3" height="254.0" fill="url(#g4)"/><rect x="448.5" y="529.7" width="1.3" height="250.3" fill="url(#g3)"/><rect x="449.5" y="530.2" width="1.3" height="249.8" fill="url(#g3)"/><rect x="450.5" y="531.0" width="1.3" height="249.0" fill="url(#g3)"/><rect x="451.5" y="534.5" width="1.3" height="245.5" fill="url(#g3)"/><rect x="452.5" y="538.0" width="1.3" height="242.0" fill="url(#g3)"/><rect x="453.5" y="541.5" width="1.3" height="238.5" fill="url(#g4)"/><rect x="454.5" y="545.0" width="1.3" height="235.0" fill="url(#g4)"/><rect x="455.5" y="567.6" width="1.3" height="212.4" fill="url(#g5)"/><rect x="456.5" y="591.9" width="1.3" height="188.1" fill="url(#g5)"/><rect x="457.5" y="572.1" width="1.3" height="207.9" fill="url(#g5)"/><rect x="458.5" y="556.5" width="1.3" height="223.5" fill="url(#g4)"/><rect x="459.5" y="557.6" width="1.3" height="222.4" fill="url(#g4)"/><rect x="460.5" y="558.0" width="1.3" height="222.0" fill="url(#g3)"/><rect x="461.5" y="557.0" width="1.3" height="223.0" fill="url(#g3)"/><rect x="462.5" y="556.9" width="1.3" height="223.1" fill="url(#g3)"/><rect x="463.5" y="558.9" width="1.3" height="221.1" fill="url(#g3)"/><rect x="464.5" y="560.8" width="1.3" height="219.2" fill="url(#g3)"/><rect x="465.5" y="562.1" width="1.3" height="217.9" fill="url(#g3)"/><rect x="466.5" y="561.8" width="1.3" height="218.2" fill="url(#g3)"/><rect x="467.5" y="561.4" width="1.3" height="218.6" fill="url(#g3)"/><rect x="468.5" y="561.7" width="1.3" height="218.3" fill="url(#g3)"/><rect x="469.5" y="563.0" width="1.3" height="217.0" fill="url(#g3)"/><rect x="470.5" y="564.2" width="1.3" height="215.8" fill="url(#g3)"/><rect x="471.5" y="565.5" width="1.3" height="214.5" fill="url(#g3)"/><rect x="472.5" y="566.5" width="1.3" height="213.5" fill="url(#g3)"/><rect x="473.5" y="567.2" width="1.3" height="212.8" fill="url(#g3)"/><rect x="474.5" y="568.0" width="1.3" height="212.0" fill="url(#g3)"/><rect x="475.5" y="568.7" width="1.3" height="211.3" fill="url(#g3)"/><rect x="476.5" y="578.0" width="1.3" height="202.0" fill="url(#g2)"/><rect x="477.5" y="595.8" width="1.3" height="184.2" fill="url(#g1)"/><rect x="478.5" y="598.6" width="1.3" height="181.4" fill="url(#g0)"/><rect x="479.5" y="586.4" width="1.3" height="193.6" fill="url(#g0)"/><rect x="480.5" y="574.2" width="1.3" height="205.8" fill="url(#g0)"/><rect x="481.5" y="567.6" width="1.3" height="212.4" fill="url(#g1)"/><rect x="482.5" y="566.7" width="1.3" height="213.3" fill="url(#g1)"/><rect x="483.5" y="565.8" width="1.3" height="214.2" fill="url(#g1)"/><rect x="484.5" y="564.9" width="1.3" height="215.1" fill="url(#g2)"/><rect x="485.5" y="570.0" width="1.3" height="210.0" fill="url(#g2)"/><rect x="486.5" y="599.0" width="1.3" height="181.0" fill="url(#g2)"/><rect x="487.5" y="610.8" width="1.3" height="169.2" fill="url(#g2)"/><rect x="488.5" y="611.1" width="1.3" height="168.9" fill="url(#g2)"/><rect x="489.5" y="611.5" width="1.3" height="168.5" fill="url(#g2)"/><rect x="490.5" y="612.4" width="1.3" height="167.6" fill="url(#g2)"/><rect x="491.5" y="613.8" width="1.3" height="166.2" fill="url(#g2)"/><rect x="492.5" y="615.2" width="1.3" height="164.8" fill="url(#g2)"/><rect x="493.5" y="615.1" width="1.3" height="164.9" fill="url(#g2)"/><rect x="494.5" y="614.5" width="1.3" height="165.5" fill="url(#g2)"/><rect x="495.5" y="613.8" width="1.3" height="166.2" fill="url(#g2)"/><rect x="496.5" y="614.6" width="1.3" height="165.4" fill="url(#g2)"/><rect x="497.5" y="616.1" width="1.3" height="163.9" fill="url(#g2)"/><rect x="498.5" y="617.6" width="1.3" height="162.4" fill="url(#g2)"/><rect x="499.5" y="617.7" width="1.3" height="162.3" fill="url(#g2)"/><rect x="500.5" y="617.2" width="1.3" height="162.8" fill="url(#g2)"/><rect x="501.5" y="616.6" width="1.3" height="163.4" fill="url(#g2)"/><rect x="502.5" y="617.3" width="1.3" height="162.7" fill="url(#g2)"/><rect x="503.5" y="618.3" width="1.3" height="161.7" fill="url(#g2)"/><rect x="504.5" y="619.3" width="1.3" height="160.7" fill="url(#g3)"/><rect x="505.5" y="607.0" width="1.3" height="173.0" fill="url(#g4)"/><rect x="506.5" y="591.3" width="1.3" height="188.7" fill="url(#g5)"/><rect x="507.5" y="575.7" width="1.3" height="204.3" fill="url(#g6)"/><rect x="508.5" y="594.1" width="1.3" height="185.9" fill="url(#g6)"/><rect x="509.5" y="616.3" width="1.3" height="163.7" fill="url(#g6)"/><rect x="510.5" y="606.7" width="1.3" height="173.3" fill="url(#g6)"/><rect x="511.5" y="593.5" width="1.3" height="186.5" fill="url(#g5)"/><rect x="512.5" y="580.3" width="1.3" height="199.7" fill="url(#g3)"/><rect x="513.5" y="579.3" width="1.3" height="200.7" fill="url(#g2)"/><rect x="514.5" y="579.7" width="1.3" height="200.3" fill="url(#g2)"/><rect x="515.5" y="580.0" width="1.3" height="200.0" fill="url(#g2)"/><rect x="516.5" y="581.2" width="1.3" height="198.8" fill="url(#g2)"/><rect x="517.5" y="582.5" width="1.3" height="197.5" fill="url(#g2)"/><rect x="518.5" y="582.0" width="1.3" height="198.0" fill="url(#g2)"/><rect x="519.5" y="581.6" width="1.3" height="198.4" fill="url(#g2)"/><rect x="520.5" y="582.3" width="1.3" height="197.7" fill="url(#g2)"/><rect x="521.5" y="583.0" width="1.3" height="197.0" fill="url(#g2)"/><rect x="522.5" y="583.7" width="1.3" height="196.3" fill="url(#g2)"/><rect x="523.5" y="584.5" width="1.3" height="195.5" fill="url(#g2)"/><rect x="524.5" y="585.9" width="1.3" height="194.1" fill="url(#g2)"/><rect x="525.5" y="587.2" width="1.3" height="192.8" fill="url(#g2)"/><rect x="526.5" y="588.3" width="1.3" height="191.7" fill="url(#g2)"/><rect x="527.5" y="587.4" width="1.3" height="192.6" fill="url(#g2)"/><rect x="528.5" y="586.6" width="1.3" height="193.4" fill="url(#g2)"/><rect x="529.5" y="588.0" width="1.3" height="192.0" fill="url(#g2)"/><rect x="530.5" y="590.0" width="1.3" height="190.0" fill="url(#g2)"/><rect x="531.5" y="589.6" width="1.3" height="190.4" fill="url(#g2)"/><rect x="532.5" y="588.6" width="1.3" height="191.4" fill="url(#g2)"/><rect x="533.5" y="589.8" width="1.3" height="190.2" fill="url(#g2)"/><rect x="534.5" y="591.6" width="1.3" height="188.4" fill="url(#g2)"/><rect x="535.5" y="593.4" width="1.3" height="186.6" fill="url(#g2)"/><rect x="536.5" y="595.1" width="1.3" height="184.9" fill="url(#g2)"/><rect x="537.5" y="594.7" width="1.3" height="185.3" fill="url(#g2)"/><rect x="538.5" y="594.1" width="1.3" height="185.9" fill="url(#g2)"/><rect x="539.5" y="594.0" width="1.3" height="186.0" fill="url(#g2)"/><rect x="540.5" y="594.8" width="1.3" height="185.2" fill="url(#g2)"/><rect x="541.5" y="595.7" width="1.3" height="184.3" fill="url(#g2)"/><rect x="542.5" y="596.3" width="1.3" height="183.7" fill="url(#g2)"/><rect x="543.5" y="596.3" width="1.3" height="183.7" fill="url(#g2)"/><rect x="544.5" y="596.3" width="1.3" height="183.7" fill="url(#g2)"/><rect x="545.5" y="596.3" width="1.3" height="183.7" fill="url(#g2)"/><rect x="546.5" y="596.3" width="1.3" height="183.7" fill="url(#g2)"/><rect x="547.5" y="598.2" width="1.3" height="181.8" fill="url(#g2)"/><rect x="548.5" y="600.2" width="1.3" height="179.8" fill="url(#g2)"/><rect x="549.5" y="596.2" width="1.3" height="183.8" fill="url(#g2)"/><rect x="550.5" y="592.3" width="1.3" height="187.7" fill="url(#g2)"/><rect x="551.5" y="594.8" width="1.3" height="185.2" fill="url(#g2)"/><rect x="552.5" y="597.4" width="1.3" height="182.6" fill="url(#g2)"/><rect x="553.5" y="599.9" width="1.3" height="180.1" fill="url(#g2)"/><rect x="554.5" y="601.5" width="1.3" height="178.5" fill="url(#g2)"/><rect x="555.5" y="602.2" width="1.3" height="177.8" fill="url(#g2)"/><rect x="556.5" y="602.9" width="1.3" height="177.1" fill="url(#g2)"/><rect x="557.5" y="604.0" width="1.3" height="176.0" fill="url(#g2)"/><rect x="558.5" y="605.5" width="1.3" height="174.5" fill="url(#g2)"/><rect x="559.5" y="607.0" width="1.3" height="173.0" fill="url(#g2)"/><rect x="560.5" y="608.5" width="1.3" height="171.5" fill="url(#g2)"/><rect x="561.5" y="608.7" width="1.3" height="171.3" fill="url(#g2)"/><rect x="562.5" y="608.1" width="1.3" height="171.9" fill="url(#g2)"/><rect x="563.5" y="607.5" width="1.3" height="172.5" fill="url(#g2)"/><rect x="564.5" y="607.5" width="1.3" height="172.5" fill="url(#g2)"/><rect x="565.5" y="608.1" width="1.3" height="171.9" fill="url(#g2)"/><rect x="566.5" y="607.0" width="1.3" height="173.0" fill="url(#g2)"/><rect x="567.5" y="605.9" width="1.3" height="174.1" fill="url(#g1)"/><rect x="568.5" y="620.3" width="1.3" height="159.7" fill="url(#g1)"/><rect x="569.5" y="641.4" width="1.3" height="138.6" fill="url(#g0)"/><rect x="570.5" y="636.7" width="1.3" height="143.3" fill="url(#g0)"/><rect x="571.5" y="621.1" width="1.3" height="158.9" fill="url(#g0)"/><rect x="572.5" y="610.1" width="1.3" height="169.9" fill="url(#g0)"/><rect x="573.5" y="610.1" width="1.3" height="169.9" fill="url(#g0)"/><rect x="574.5" y="610.1" width="1.3" height="169.9" fill="url(#g0)"/><rect x="575.5" y="610.1" width="1.3" height="169.9" fill="url(#g0)"/><rect x="576.5" y="624.6" width="1.3" height="155.4" fill="url(#g0)"/><rect x="577.5" y="642.7" width="1.3" height="137.3" fill="url(#g0)"/><rect x="578.5" y="647.8" width="1.3" height="132.2" fill="url(#g0)"/><rect x="579.5" y="633.4" width="1.3" height="146.6" fill="url(#g1)"/><rect x="580.5" y="618.9" width="1.3" height="161.1" fill="url(#g1)"/><rect x="581.5" y="615.6" width="1.3" height="164.4" fill="url(#g2)"/><rect x="582.5" y="615.1" width="1.3" height="164.9" fill="url(#g2)"/><rect x="583.5" y="616.0" width="1.3" height="164.0" fill="url(#g2)"/><rect x="584.5" y="616.9" width="1.3" height="163.1" fill="url(#g2)"/><rect x="585.5" y="617.9" width="1.3" height="162.1" fill="url(#g2)"/><rect x="586.5" y="618.6" width="1.3" height="161.4" fill="url(#g2)"/><rect x="587.5" y="619.3" width="1.3" height="160.7" fill="url(#g2)"/><rect x="588.5" y="619.9" width="1.3" height="160.1" fill="url(#g2)"/><rect x="589.5" y="619.5" width="1.3" height="160.5" fill="url(#g2)"/><rect x="590.5" y="619.0" width="1.3" height="161.0" fill="url(#g2)"/><rect x="591.5" y="618.5" width="1.3" height="161.5" fill="url(#g2)"/><rect x="592.5" y="618.0" width="1.3" height="162.0" fill="url(#g2)"/><rect x="593.5" y="619.6" width="1.3" height="160.4" fill="url(#g2)"/><rect x="594.5" y="620.9" width="1.3" height="159.1" fill="url(#g2)"/><rect x="595.5" y="619.5" width="1.3" height="160.5" fill="url(#g2)"/><rect x="596.5" y="618.2" width="1.3" height="161.8" fill="url(#g2)"/><rect x="597.5" y="617.1" width="1.3" height="162.9" fill="url(#g2)"/><rect x="598.5" y="618.5" width="1.3" height="161.5" fill="url(#g2)"/><rect x="599.5" y="619.8" width="1.3" height="160.2" fill="url(#g2)"/><rect x="600.5" y="620.8" width="1.3" height="159.2" fill="url(#g2)"/><rect x="601.5" y="619.3" width="1.3" height="160.7" fill="url(#g2)"/><rect x="602.5" y="617.8" width="1.3" height="162.2" fill="url(#g2)"/><rect x="603.5" y="616.3" width="1.3" height="163.7" fill="url(#g2)"/><rect x="604.5" y="616.6" width="1.3" height="163.4" fill="url(#g2)"/><rect x="605.5" y="617.4" width="1.3" height="162.6" fill="url(#g2)"/><rect x="606.5" y="617.9" width="1.3" height="162.1" fill="url(#g2)"/><rect x="607.5" y="617.1" width="1.3" height="162.9" fill="url(#g2)"/><rect x="608.5" y="616.4" width="1.3" height="163.6" fill="url(#g2)"/><rect x="609.5" y="615.6" width="1.3" height="164.4" fill="url(#g2)"/><rect x="610.5" y="615.7" width="1.3" height="164.3" fill="url(#g2)"/><rect x="611.5" y="617.7" width="1.3" height="162.3" fill="url(#g2)"/><rect x="612.5" y="619.6" width="1.3" height="160.4" fill="url(#g2)"/><rect x="613.5" y="621.6" width="1.3" height="158.4" fill="url(#g2)"/><rect x="614.5" y="623.5" width="1.3" height="156.5" fill="url(#g2)"/><rect x="615.5" y="625.1" width="1.3" height="154.9" fill="url(#g2)"/><rect x="616.5" y="626.8" width="1.3" height="153.2" fill="url(#g2)"/><rect x="617.5" y="627.6" width="1.3" height="152.4" fill="url(#g1)"/><rect x="618.5" y="626.5" width="1.3" height="153.5" fill="url(#g1)"/><rect x="619.5" y="626.5" width="1.3" height="153.5" fill="url(#g0)"/><rect x="620.5" y="628.0" width="1.3" height="152.0" fill="url(#g0)"/><rect x="621.5" y="629.5" width="1.3" height="150.5" fill="url(#g0)"/><rect x="622.5" y="631.0" width="1.3" height="149.0" fill="url(#g0)"/><rect x="623.5" y="632.5" width="1.3" height="147.5" fill="url(#g0)"/><rect x="624.5" y="633.9" width="1.3" height="146.1" fill="url(#g0)"/><rect x="625.5" y="635.3" width="1.3" height="144.7" fill="url(#g0)"/><rect x="626.5" y="636.7" width="1.3" height="143.3" fill="url(#g0)"/><rect x="627.5" y="638.1" width="1.3" height="141.9" fill="url(#g0)"/><rect x="628.5" y="639.5" width="1.3" height="140.5" fill="url(#g0)"/><rect x="629.5" y="641.0" width="1.3" height="139.0" fill="url(#g0)"/><rect x="630.5" y="641.4" width="1.3" height="138.6" fill="url(#g0)"/><rect x="631.5" y="640.8" width="1.3" height="139.2" fill="url(#g0)"/><rect x="632.5" y="640.1" width="1.3" height="139.9" fill="url(#g0)"/><rect x="633.5" y="638.9" width="1.3" height="141.1" fill="url(#g0)"/><rect x="634.5" y="637.1" width="1.3" height="142.9" fill="url(#g0)"/><rect x="635.5" y="635.3" width="1.3" height="144.7" fill="url(#g0)"/><rect x="636.5" y="633.5" width="1.3" height="146.5" fill="url(#g0)"/><rect x="637.5" y="633.2" width="1.3" height="146.8" fill="url(#g0)"/><rect x="638.5" y="633.9" width="1.3" height="146.1" fill="url(#g0)"/><rect x="639.5" y="634.5" width="1.3" height="145.5" fill="url(#g0)"/><rect x="640.5" y="635.3" width="1.3" height="144.7" fill="url(#g0)"/><rect x="641.5" y="636.0" width="1.3" height="144.0" fill="url(#g0)"/><rect x="642.5" y="636.8" width="1.3" height="143.2" fill="url(#g0)"/><rect x="643.5" y="637.6" width="1.3" height="142.4" fill="url(#g0)"/><rect x="644.5" y="635.0" width="1.3" height="145.0" fill="url(#g0)"/><rect x="645.5" y="630.9" width="1.3" height="149.1" fill="url(#g0)"/><rect x="646.5" y="626.8" width="1.3" height="153.2" fill="url(#g0)"/><rect x="647.5" y="623.9" width="1.3" height="156.1" fill="url(#g0)"/><rect x="648.5" y="623.5" width="1.3" height="156.5" fill="url(#g0)"/><rect x="649.5" y="623.1" width="1.3" height="156.9" fill="url(#g0)"/><rect x="650.5" y="621.8" width="1.3" height="158.2" fill="url(#g0)"/><rect x="651.5" y="620.3" width="1.3" height="159.7" fill="url(#g0)"/><rect x="652.5" y="620.0" width="1.3" height="160.0" fill="url(#g2)"/><rect x="653.5" y="620.0" width="1.3" height="160.0" fill="url(#g5)"/><rect x="654.5" y="590.0" width="1.3" height="190.0" fill="url(#g9)"/><rect x="655.5" y="582.1" width="1.3" height="197.9" fill="url(#g12)"/><rect x="656.5" y="581.6" width="1.3" height="198.4" fill="url(#g14)"/><rect x="657.5" y="583.9" width="1.3" height="196.1" fill="url(#g14)"/><rect x="658.5" y="586.9" width="1.3" height="193.1" fill="url(#g14)"/><rect x="659.5" y="587.8" width="1.3" height="192.2" fill="url(#g13)"/><rect x="660.5" y="586.7" width="1.3" height="193.3" fill="url(#g13)"/><rect x="661.5" y="585.6" width="1.3" height="194.4" fill="url(#g12)"/><rect x="662.5" y="584.5" width="1.3" height="195.5" fill="url(#g12)"/><rect x="663.5" y="583.2" width="1.3" height="196.8" fill="url(#g12)"/><rect x="664.5" y="581.8" width="1.3" height="198.2" fill="url(#g12)"/><rect x="665.5" y="580.5" width="1.3" height="199.5" fill="url(#g12)"/><rect x="666.5" y="581.0" width="1.3" height="199.0" fill="url(#g12)"/><rect x="667.5" y="581.6" width="1.3" height="198.4" fill="url(#g12)"/><rect x="668.5" y="578.4" width="1.3" height="201.6" fill="url(#g12)"/><rect x="669.5" y="575.3" width="1.3" height="204.7" fill="url(#g12)"/><rect x="670.5" y="572.1" width="1.3" height="207.9" fill="url(#g12)"/><rect x="671.5" y="569.9" width="1.3" height="210.1" fill="url(#g12)"/><rect x="672.5" y="575.8" width="1.3" height="204.2" fill="url(#g12)"/><rect x="673.5" y="581.7" width="1.3" height="198.3" fill="url(#g12)"/><rect x="674.5" y="581.7" width="1.3" height="198.3" fill="url(#g11)"/><rect x="675.5" y="577.8" width="1.3" height="202.2" fill="url(#g11)"/><rect x="676.5" y="574.6" width="1.3" height="205.4" fill="url(#g11)"/><rect x="677.5" y="579.0" width="1.3" height="201.0" fill="url(#g11)"/><rect x="678.5" y="583.3" width="1.3" height="196.7" fill="url(#g11)"/><rect x="679.5" y="587.7" width="1.3" height="192.3" fill="url(#g11)"/><rect x="680.5" y="588.3" width="1.3" height="191.7" fill="url(#g11)"/><rect x="681.5" y="587.3" width="1.3" height="192.7" fill="url(#g11)"/><rect x="682.5" y="586.1" width="1.3" height="193.9" fill="url(#g11)"/><rect x="683.5" y="584.3" width="1.3" height="195.7" fill="url(#g11)"/><rect x="684.5" y="582.5" width="1.3" height="197.5" fill="url(#g11)"/><rect x="685.5" y="583.1" width="1.3" height="196.9" fill="url(#g11)"/><rect x="686.5" y="586.2" width="1.3" height="193.8" fill="url(#g11)"/><rect x="687.5" y="587.9" width="1.3" height="192.1" fill="url(#g11)"/><rect x="688.5" y="586.6" width="1.3" height="193.4" fill="url(#g12)"/><rect x="689.5" y="585.3" width="1.3" height="194.7" fill="url(#g12)"/><rect x="690.5" y="584.3" width="1.3" height="195.7" fill="url(#g12)"/><rect x="691.5" y="586.3" width="1.3" height="193.7" fill="url(#g12)"/><rect x="692.5" y="588.2" width="1.3" height="191.8" fill="url(#g12)"/><rect x="693.5" y="589.6" width="1.3" height="190.4" fill="url(#g12)"/><rect x="694.5" y="590.6" width="1.3" height="189.4" fill="url(#g12)"/><rect x="695.5" y="591.6" width="1.3" height="188.4" fill="url(#g12)"/><rect x="696.5" y="591.3" width="1.3" height="188.7" fill="url(#g12)"/><rect x="697.5" y="589.0" width="1.3" height="191.0" fill="url(#g12)"/><rect x="698.5" y="586.7" width="1.3" height="193.3" fill="url(#g14)"/><rect x="699.5" y="574.9" width="1.3" height="205.1" fill="url(#g18)"/><rect x="700.5" y="548.9" width="1.3" height="231.1" fill="url(#g22)"/><rect x="701.5" y="523.0" width="1.3" height="257.0" fill="url(#g26)"/><rect x="702.5" y="509.8" width="1.3" height="270.2" fill="url(#g28)"/><rect x="703.5" y="509.3" width="1.3" height="270.7" fill="url(#g28)"/><rect x="704.5" y="508.8" width="1.3" height="271.2" fill="url(#g28)"/><rect x="705.5" y="501.4" width="1.3" height="278.6" fill="url(#g28)"/><rect x="706.5" y="496.2" width="1.3" height="283.8" fill="url(#g28)"/><rect x="707.5" y="493.3" width="1.3" height="286.7" fill="url(#g28)"/><rect x="708.5" y="490.3" width="1.3" height="289.7" fill="url(#g28)"/><rect x="709.5" y="487.4" width="1.3" height="292.6" fill="url(#g29)"/><rect x="710.5" y="485.5" width="1.3" height="294.5" fill="url(#g31)"/><rect x="711.5" y="486.0" width="1.3" height="294.0" fill="url(#g35)"/><rect x="712.5" y="486.5" width="1.3" height="293.5" fill="url(#g37)"/><rect x="713.5" y="486.6" width="1.3" height="293.4" fill="url(#g38)"/><rect x="714.5" y="482.7" width="1.3" height="297.3" fill="url(#g38)"/><rect x="715.5" y="478.8" width="1.3" height="301.2" fill="url(#g38)"/><rect x="716.5" y="474.9" width="1.3" height="305.1" fill="url(#g38)"/><rect x="717.5" y="475.6" width="1.3" height="304.4" fill="url(#g38)"/><rect x="718.5" y="478.3" width="1.3" height="301.7" fill="url(#g38)"/><rect x="719.5" y="477.9" width="1.3" height="302.1" fill="url(#g38)"/><rect x="720.5" y="465.6" width="1.3" height="314.4" fill="url(#g38)"/><rect x="721.5" y="453.2" width="1.3" height="326.8" fill="url(#g38)"/><rect x="722.5" y="440.9" width="1.3" height="339.1" fill="url(#g38)"/><rect x="723.5" y="442.4" width="1.3" height="337.6" fill="url(#g38)"/><rect x="724.5" y="457.9" width="1.3" height="322.1" fill="url(#g38)"/><rect x="725.5" y="456.5" width="1.3" height="323.5" fill="url(#g38)"/><rect x="726.5" y="438.2" width="1.3" height="341.8" fill="url(#g38)"/><rect x="727.5" y="419.9" width="1.3" height="360.1" fill="url(#g37)"/><rect x="728.5" y="424.5" width="1.3" height="355.5" fill="url(#g35)"/><rect x="729.5" y="429.2" width="1.3" height="350.8" fill="url(#g32)"/><rect x="730.5" y="460.1" width="1.3" height="319.9" fill="url(#g30)"/><rect x="731.5" y="492.1" width="1.3" height="287.9" fill="url(#g29)"/><rect x="732.5" y="487.1" width="1.3" height="292.9" fill="url(#g29)"/><rect x="733.5" y="493.1" width="1.3" height="286.9" fill="url(#g29)"/><rect x="734.5" y="499.2" width="1.3" height="280.8" fill="url(#g29)"/><rect x="735.5" y="505.2" width="1.3" height="274.8" fill="url(#g29)"/><rect x="736.5" y="510.1" width="1.3" height="269.9" fill="url(#g29)"/><rect x="737.5" y="513.2" width="1.3" height="266.8" fill="url(#g29)"/><rect x="738.5" y="516.4" width="1.3" height="263.6" fill="url(#g29)"/><rect x="739.5" y="510.3" width="1.3" height="269.7" fill="url(#g29)"/><rect x="740.5" y="503.1" width="1.3" height="276.9" fill="url(#g29)"/><rect x="741.5" y="488.8" width="1.3" height="291.2" fill="url(#g29)"/><rect x="742.5" y="471.4" width="1.3" height="308.6" fill="url(#g30)"/><rect x="743.5" y="454.0" width="1.3" height="326.0" fill="url(#g31)"/><rect x="744.5" y="455.0" width="1.3" height="325.0" fill="url(#g34)"/><rect x="745.5" y="468.4" width="1.3" height="311.6" fill="url(#g35)"/><rect x="746.5" y="481.8" width="1.3" height="298.2" fill="url(#g36)"/><rect x="747.5" y="493.6" width="1.3" height="286.4" fill="url(#g35)"/><rect x="748.5" y="499.2" width="1.3" height="280.8" fill="url(#g33)"/><rect x="749.5" y="504.8" width="1.3" height="275.2" fill="url(#g31)"/><rect x="750.5" y="507.0" width="1.3" height="273.0" fill="url(#g29)"/><rect x="751.5" y="504.1" width="1.3" height="275.9" fill="url(#g28)"/><rect x="752.5" y="504.2" width="1.3" height="275.8" fill="url(#g28)"/><rect x="753.5" y="508.6" width="1.3" height="271.4" fill="url(#g28)"/><rect x="754.5" y="513.0" width="1.3" height="267.0" fill="url(#g28)"/><rect x="755.5" y="512.7" width="1.3" height="267.3" fill="url(#g28)"/><rect x="756.5" y="507.6" width="1.3" height="272.4" fill="url(#g28)"/><rect x="757.5" y="502.5" width="1.3" height="277.5" fill="url(#g28)"/><rect x="758.5" y="498.9" width="1.3" height="281.1" fill="url(#g28)"/><rect x="759.5" y="495.8" width="1.3" height="284.2" fill="url(#g29)"/><rect x="760.5" y="492.8" width="1.3" height="287.2" fill="url(#g31)"/><rect x="761.5" y="489.7" width="1.3" height="290.3" fill="url(#g33)"/><rect x="762.5" y="492.7" width="1.3" height="287.3" fill="url(#g35)"/><rect x="763.5" y="483.3" width="1.3" height="296.7" fill="url(#g36)"/><rect x="764.5" y="465.7" width="1.3" height="314.3" fill="url(#g36)"/><rect x="765.5" y="460.9" width="1.3" height="319.1" fill="url(#g36)"/><rect x="766.5" y="486.2" width="1.3" height="293.8" fill="url(#g35)"/><rect x="767.5" y="505.6" width="1.3" height="274.4" fill="url(#g34)"/><rect x="768.5" y="511.2" width="1.3" height="268.8" fill="url(#g31)"/><rect x="769.5" y="515.4" width="1.3" height="264.6" fill="url(#g30)"/><rect x="770.5" y="516.2" width="1.3" height="263.8" fill="url(#g29)"/><rect x="771.5" y="517.0" width="1.3" height="263.0" fill="url(#g29)"/><rect x="772.5" y="517.8" width="1.3" height="262.2" fill="url(#g29)"/><rect x="773.5" y="518.9" width="1.3" height="261.1" fill="url(#g29)"/><rect x="774.5" y="520.3" width="1.3" height="259.7" fill="url(#g29)"/><rect x="775.5" y="521.6" width="1.3" height="258.4" fill="url(#g28)"/><rect x="776.5" y="523.0" width="1.3" height="257.0" fill="url(#g27)"/><rect x="777.5" y="525.5" width="1.3" height="254.5" fill="url(#g26)"/><rect x="778.5" y="529.8" width="1.3" height="250.2" fill="url(#g25)"/><rect x="779.5" y="534.1" width="1.3" height="245.9" fill="url(#g25)"/><rect x="780.5" y="538.3" width="1.3" height="241.7" fill="url(#g25)"/><rect x="781.5" y="542.3" width="1.3" height="237.7" fill="url(#g25)"/><rect x="782.5" y="543.5" width="1.3" height="236.5" fill="url(#g25)"/><rect x="783.5" y="544.6" width="1.3" height="235.4" fill="url(#g24)"/><rect x="784.5" y="545.8" width="1.3" height="234.2" fill="url(#g23)"/><rect x="785.5" y="548.2" width="1.3" height="231.8" fill="url(#g22)"/><rect x="786.5" y="552.4" width="1.3" height="227.6" fill="url(#g21)"/><rect x="787.5" y="553.8" width="1.3" height="226.2" fill="url(#g21)"/><rect x="788.5" y="550.7" width="1.3" height="229.3" fill="url(#g21)"/><rect x="789.5" y="567.5" width="1.3" height="212.5" fill="url(#g20)"/><rect x="790.5" y="584.2" width="1.3" height="195.8" fill="url(#g18)"/><rect x="791.5" y="593.5" width="1.3" height="186.5" fill="url(#g16)"/><rect x="792.5" y="572.7" width="1.3" height="207.3" fill="url(#g15)"/><rect x="793.5" y="552.0" width="1.3" height="228.0" fill="url(#g16)"/><rect x="794.5" y="567.1" width="1.3" height="212.9" fill="url(#g16)"/><rect x="795.5" y="586.1" width="1.3" height="193.9" fill="url(#g16)"/><rect x="796.5" y="603.9" width="1.3" height="176.1" fill="url(#g13)"/><rect x="797.5" y="609.6" width="1.3" height="170.4" fill="url(#g8)"/><rect x="798.5" y="614.8" width="1.3" height="165.2" fill="url(#g5)"/><rect x="799.5" y="615.8" width="1.3" height="164.2" fill="url(#g4)"/><rect x="800.5" y="616.7" width="1.3" height="163.3" fill="url(#g3)"/><rect x="801.5" y="617.7" width="1.3" height="162.3" fill="url(#g3)"/><rect x="802.5" y="619.0" width="1.3" height="161.0" fill="url(#g3)"/><rect x="803.5" y="620.2" width="1.3" height="159.8" fill="url(#g3)"/><rect x="804.5" y="619.7" width="1.3" height="160.3" fill="url(#g3)"/><rect x="805.5" y="616.6" width="1.3" height="163.4" fill="url(#g3)"/><rect x="806.5" y="613.6" width="1.3" height="166.4" fill="url(#g3)"/><rect x="807.5" y="614.6" width="1.3" height="165.4" fill="url(#g3)"/><rect x="808.5" y="618.4" width="1.3" height="161.6" fill="url(#g3)"/><rect x="809.5" y="622.1" width="1.3" height="157.9" fill="url(#g3)"/><rect x="810.5" y="625.8" width="1.3" height="154.2" fill="url(#g3)"/><rect x="811.5" y="629.5" width="1.3" height="150.5" fill="url(#g3)"/><path d="M58.6,347.8 L60.7,301.2 L67.3,317.6 L71.6,314.1 L75.6,305.1 L77.6,306.4 L80.2,313.3 L82.0,275.6 L84.5,286.5 L89.7,297.7 L92.0,315.0 L94.9,316.7 L99.2,331.4 L103.5,328.0 L107.0,322.8 L110.4,328.0 L116.5,344.4 L122.4,271.8 L124.9,287.0 L126.5,320.7 L128.3,281.2 L130.3,276.3 L132.8,279.3 L135.8,275.9 L138.8,287.2 L140.7,288.2 L142.7,290.1 L144.7,294.1 L147.3,297.0 L149.6,277.3 L150.6,229.9 L152.6,230.9 L154.6,291.1 L157.5,297.0 L159.5,304.0 L162.5,310.9 L164.4,341.5 L167.4,343.5 L169.8,339.5 L172.3,350.4 L174.9,367.2 L177.3,354.3 L182.8,338.5 L186.2,356.3 L189.1,361.2 L191.1,360.2 L192.4,372.2 L195.9,377.2 L199.9,383.1 L203.4,390.0 L206.8,385.1 L211.3,395.9 L213.7,390.0 L217.7,392.0 L222.6,400.9 L225.2,398.9 L227.9,402.8 L230.5,393.0 L232.5,345.6 L234.4,333.7 L239.8,329.8 L241.8,333.7 L243.7,380.1 L247.3,381.1 L249.7,392.0 L251.6,354.4 L253.6,394.0 L257.2,394.0 L259.1,357.4 L263.5,350.5 L265.1,402.8 L268.0,409.3 L270.9,413.2 L274.5,407.7 L277.2,414.2 L279.8,413.2 L282.8,425.1 L286.7,431.0 L290.3,442.8 L293.6,440.9 L296.2,421.1 L297.6,377.7 L299.6,364.2 L301.5,385.6 L304.5,428.0 L308.5,436.9 L312.4,447.8 L315.4,450.7 L316.8,484.3 L318.3,446.8 L321.3,448.8 L324.3,492.2 L327.8,478.4 L330.2,490.2 L334.1,496.2 L336.5,503.1 L339.1,500.1 L344.0,506.7 L348.9,516.1 L351.9,513.6 L354.2,515.6 L356.8,520.5 L359.8,516.5 L362.7,513.6 L366.1,509.0 L368.6,515.6 L370.6,511.6 L372.6,465.2 L375.6,441.5 L380.5,423.3 L383.5,437.5 L386.4,453.3 L389.0,451.4 L391.8,445.4 L394.3,453.3 L399.3,452.3 L403.2,451.8 L404.8,449.4 L407.2,443.9 L409.5,458.3 L412.7,459.3 L415.1,457.3 L417.4,462.8 L420.5,457.4 L422.5,459.8 L423.9,514.1 L426.9,511.5 L429.8,514.1 L432.8,504.2 L435.7,493.3 L437.7,505.2 L439.7,504.2 L442.7,513.1 L444.9,561.2 L446.9,521.7 L448.9,529.6 L450.9,530.6 L455.4,546.4 L456.8,595.8 L458.8,556.3 L460.7,558.3 L462.7,556.3 L465.7,562.2 L468.6,561.2 L472.6,566.2 L476.5,569.1 L478.5,604.7 L481.5,568.1 L485.8,564.2 L487.4,610.6 L490.4,611.6 L493.3,615.6 L496.3,613.6 L499.3,618.1 L502.2,616.5 L505.2,619.5 L508.1,574.1 L510.1,618.5 L513.1,579.0 L516.0,580.0 L518.0,582.5 L519.9,581.5 L523.9,584.4 L526.9,588.4 L529.2,586.4 L531.2,590.4 L533.2,588.4 L537.1,595.3 L539.7,593.7 L542.7,596.3 L547.0,596.3 L549.0,600.2 L551.0,592.3 L554.5,601.2 L557.5,603.2 L561.4,609.1 L564.4,607.2 L566.0,608.1 L568.3,605.6 L570.3,647.7 L572.7,610.1 L576.2,610.1 L578.6,653.6 L581.2,616.0 L583.1,615.1 L586.1,618.0 L589.1,620.0 L593.0,618.0 L594.9,621.0 L597.9,617.0 L600.9,621.0 L604.2,616.0 L606.8,618.0 L610.7,615.1 L614.7,623.0 L617.7,627.9 L619.6,625.9 L623.6,631.9 L628.5,638.8 L630.5,641.7 L633.5,639.8 L637.4,632.8 L640.4,634.8 L644.3,637.8 L647.7,624.0 L650.2,623.0 L652.2,620.0 L654.2,620.0 L655.2,582.5 L657.2,581.5 L659.5,588.4 L663.1,584.4 L666.0,580.5 L668.0,581.6 L671.9,569.3 L674.4,584.1 L676.9,574.2 L680.3,589.0 L682.8,586.5 L685.5,581.6 L687.7,588.3 L690.9,584.1 L693.4,589.0 L696.6,592.2 L699.6,585.3 L702.5,510.0 L705.0,508.8 L706.5,497.7 L710.7,485.3 L713.9,487.0 L717.3,473.7 L719.8,480.4 L723.5,434.7 L725.5,465.6 L728.0,419.9 L730.4,431.0 L731.7,494.0 L732.9,486.5 L736.6,508.8 L739.1,516.7 L741.3,501.0 L744.4,447.0 L747.8,492.5 L750.6,508.1 L752.6,502.4 L755.5,515.2 L758.3,501.0 L762.0,489.7 L763.4,493.9 L765.7,453.3 L767.7,503.9 L769.7,515.2 L773.4,518.1 L777.6,523.8 L781.9,542.2 L785.6,546.5 L787.6,555.0 L789.0,550.7 L791.8,597.6 L794.1,549.9 L796.9,603.3 L798.9,614.7 L801.8,617.5 L804.6,620.9 L807.4,612.4 L810.3,623.2 L812.0,629.5" fill="none" stroke="#e8e8e8" stroke-width="1.2" stroke-linejoin="round"/>
<line x1="380.5" y1="72" x2="380.5" y2="780" stroke="rgba(255,255,255,0.32)" stroke-width="1" stroke-dasharray="4,2"/>
<line x1="58" y1="423" x2="812" y2="423" stroke="rgba(255,255,255,0.32)" stroke-width="1" stroke-dasharray="4,2"/>
<line x1="283.5" y1="780" x2="283.5" y2="784.5" stroke="#9a9a9a" stroke-width="1"/><line x1="613" y1="780" x2="613" y2="784.5" stroke="#9a9a9a" stroke-width="1"/>
<circle cx="380.8" cy="423" r="4.2" fill="#fff"/>
<circle cx="812" cy="630" r="7.1" fill="#ffffff" fill-opacity="0.2"/>
<circle cx="812" cy="630" r="3.1" fill="#fff"/>
</svg>
<div style="position:absolute;right:775.80px;top:74.99px;font-size:11px;line-height:11px;font-weight:bold;color:#9e9e9e;white-space:nowrap;">$34</div><div style="position:absolute;right:775.80px;top:191.99px;font-size:11px;line-height:11px;font-weight:bold;color:#9e9e9e;white-space:nowrap;">$32</div><div style="position:absolute;right:775.80px;top:308.99px;font-size:11px;line-height:11px;font-weight:bold;color:#9e9e9e;white-space:nowrap;">$30</div><div style="position:absolute;right:775.80px;top:425.99px;font-size:11px;line-height:11px;font-weight:bold;color:#9e9e9e;white-space:nowrap;">$28</div><div style="position:absolute;right:775.80px;top:542.99px;font-size:11px;line-height:11px;font-weight:bold;color:#9e9e9e;white-space:nowrap;">$26</div><div style="position:absolute;right:775.80px;top:659.99px;font-size:11px;line-height:11px;font-weight:bold;color:#9e9e9e;white-space:nowrap;">$24</div><div style="position:absolute;right:775.80px;top:776.99px;font-size:11px;line-height:11px;font-weight:bold;color:#9e9e9e;white-space:nowrap;">$22</div>
<div style="position:absolute;right:776.00px;top:624.59px;font-size:11px;line-height:11px;font-weight:bold;color:#ffffff;white-space:nowrap;">$23.2</div>
<div style="position:absolute;left:59.00px;top:786.63px;font-size:10.6px;line-height:10.6px;font-weight:bold;color:#a3a3a3;white-space:nowrap;">15:09</div>
<div style="position:absolute;left:270.00px;top:786.63px;font-size:10.6px;line-height:10.6px;font-weight:bold;color:#a3a3a3;white-space:nowrap;">15:30</div>
<div style="position:absolute;left:599.40px;top:786.63px;font-size:10.6px;line-height:10.6px;font-weight:bold;color:#a3a3a3;white-space:nowrap;">16:00</div>
<div style="position:absolute;left:785.00px;top:786.63px;font-size:10.6px;line-height:10.6px;font-weight:bold;color:#a3a3a3;white-space:nowrap;">16:18</div>
<div style="position:absolute;left:14.5px;top:447px;transform:rotate(-90deg);transform-origin:0 0;font-size:12px;line-height:12px;color:#fff;white-space:nowrap;letter-spacing:-0.45px">Price $</div>
<div style="position:absolute;left:252px;top:79px;width:366px;height:25px;background:#2c2c2c;border:1px solid #363636;border-radius:5px"></div>
<div style="position:absolute;left:263px;top:91.7px;width:16px;height:1.5px;background:#fff"></div>
<div style="position:absolute;left:281.50px;top:87.58px;font-size:10.3px;line-height:10.3px;font-weight:bold;color:#ffffff;white-space:nowrap;">ATM Straddle (0DTE) &#952;-Adj</div>
<div style="position:absolute;left:427px;top:88px;width:9px;height:8.5px;background:#1de9b6"></div>
<div style="position:absolute;left:439.00px;top:87.58px;font-size:10.3px;line-height:10.3px;font-weight:bold;color:#ffffff;white-space:nowrap;">Discount (30m)</div>
<div style="position:absolute;left:521.5px;top:88px;width:9px;height:8.5px;background:#8000ff"></div>
<div style="position:absolute;left:533.00px;top:87.58px;font-size:10.3px;line-height:10.3px;font-weight:bold;color:#ffffff;white-space:nowrap;">Premium (30m)</div>
<div style="position:absolute;left:339px;top:393px;width:83px;height:22px;background:#303030;border-radius:4px"></div>
<div style="position:absolute;left:345.00px;top:400.11px;font-size:10.5px;line-height:10.5px;font-weight:bold;color:#ffffff;white-space:nowrap;">15:38</div>
<div style="position:absolute;left:378.5px;top:400px;width:1.6px;height:11px;background:#fff"></div>
<div style="position:absolute;left:387.50px;top:399.86px;font-size:10.8px;line-height:10.8px;font-weight:bold;color:#ffffff;white-space:nowrap;">$27.6</div>
</body></html>
